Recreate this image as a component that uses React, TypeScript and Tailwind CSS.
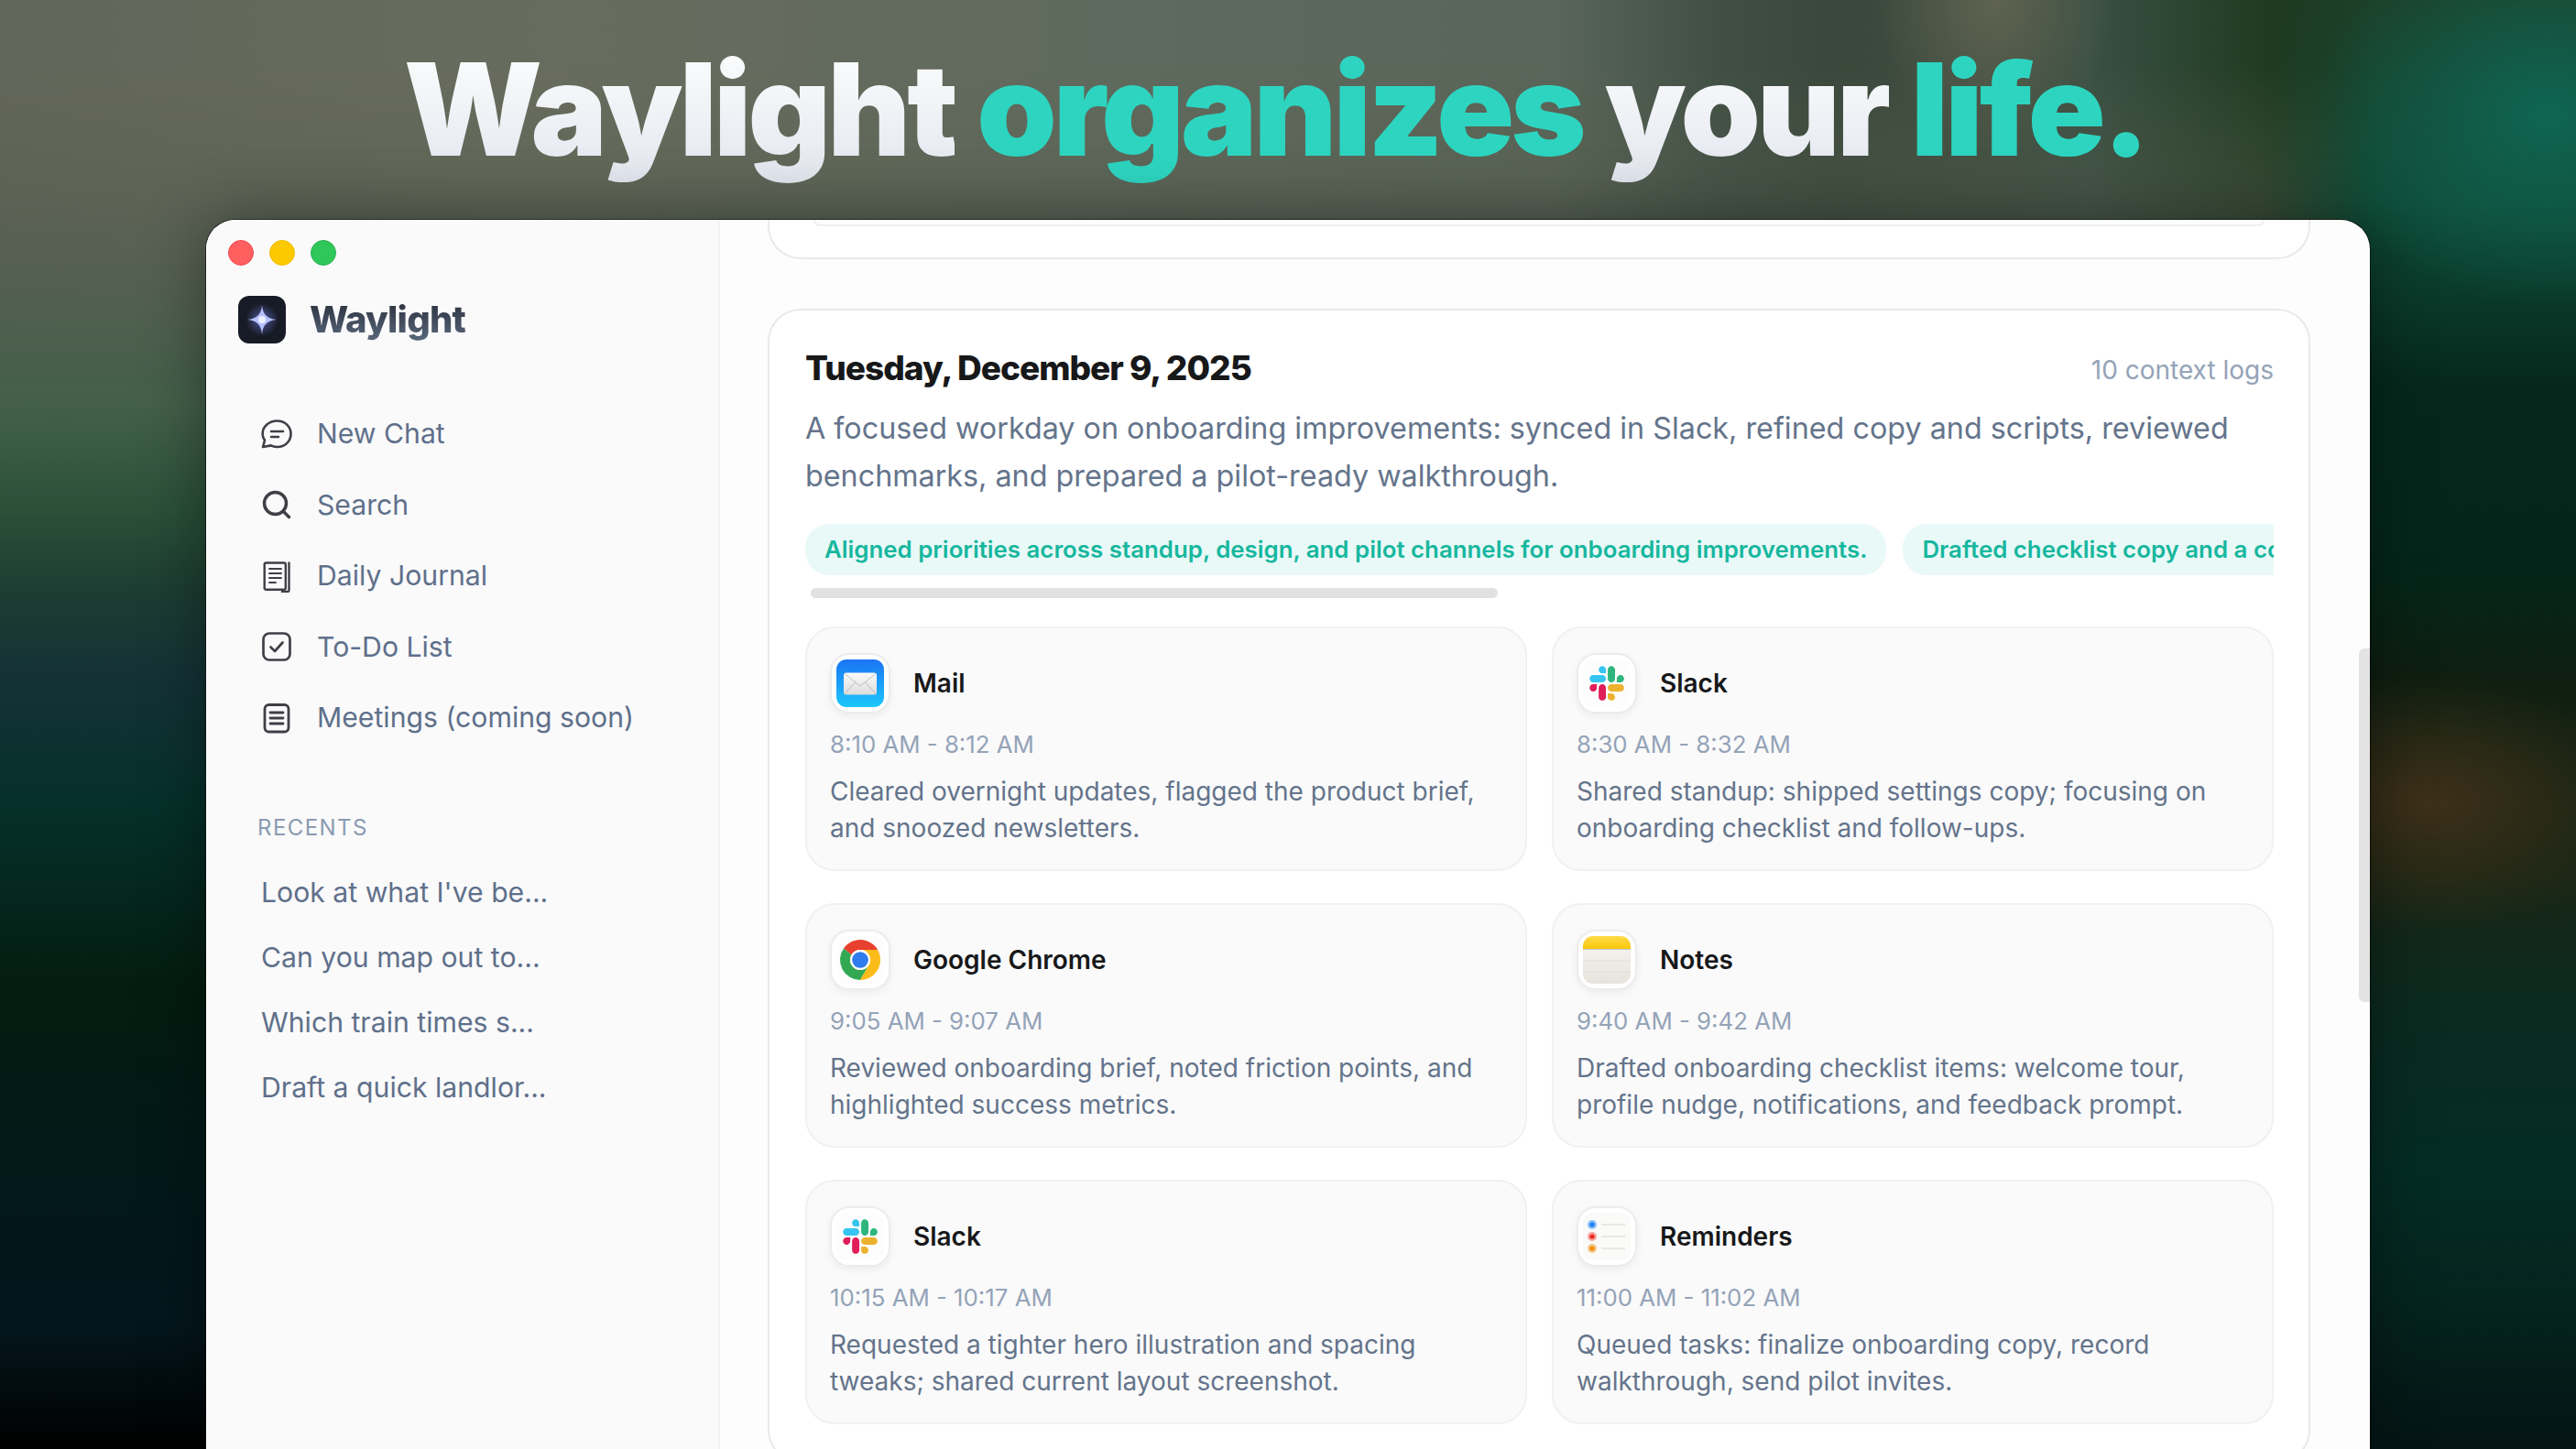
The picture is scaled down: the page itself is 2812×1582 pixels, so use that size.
import * as React from 'react';
import { Search } from 'lucide-react';

const NewChatIcon = () => (
  <svg width="36" height="36" viewBox="0 0 36 36" fill="none" stroke="#3f3f46" strokeWidth="2.6" strokeLinecap="round" strokeLinejoin="round">
    <path d="M18.5 3.5c8.600 0 15 6.200 15 14.200s-6.400 14.300-15 14.300c-2.600 0-4.800-.5-6.800-1.600L3 32l2-7.400c-1.600-2.100-2.400-4.400-2.400-6.900C2.600 9.700 9.900 3.500 18.500 3.500z" />
    <path d="M12 15h13M12 21h8" />
  </svg>
);

const JournalIcon = () => (
  <svg width="36" height="36" viewBox="0 0 36 36" fill="none" stroke="#3f3f46" strokeWidth="2.4" strokeLinecap="round" strokeLinejoin="round">
    <path d="M6.500 3.500H26a1.800 1.800 0 0 1 1.800 1.800V31a1.800 1.800 0 0 1-1.800 1.800H6.500A1.800 1.800 0 0 1 4.700 31V5.300a1.800 1.800 0 0 1 1.800-1.800z" />
    <path d="M10 10h13M10 15h13M10 20h13M10 25h7" strokeWidth="1.900" />
    <path d="M31.500 3.500v30a1.500 1.500 0 0 1-1.500 1.500h-6" />
  </svg>
);

const TodoIcon = () => (
  <svg width="36" height="36" viewBox="0 0 36 36" fill="none" stroke="#3f3f46" strokeWidth="2.700" strokeLinecap="round" strokeLinejoin="round">
    <rect x="3.500" y="3.500" width="29" height="29" rx="6.500" />
    <path d="M11.500 18.500l4.500 4.500 8.500-9.500" />
  </svg>
);

const MeetingIcon = () => (
  <svg width="36" height="36" viewBox="0 0 36 36" fill="none" stroke="#3f3f46" strokeWidth="2.8" strokeLinecap="round">
    <rect x="5" y="3.500" width="26" height="29.500" rx="4.500" />
    <path d="M11 12h14M11 18h14M11 24h14" />
  </svg>
);

const LogoIcon = () => (
  <svg width="52" height="52" viewBox="0 0 52 52">
    <defs>
      <radialGradient id="logo-glow">
        <stop offset="0" stopColor="#7f8cff" stopOpacity="0.55" />
        <stop offset="1" stopColor="#7f8cff" stopOpacity="0" />
      </radialGradient>
    </defs>
    <rect width="52" height="52" rx="12" fill="#171b26" />
    <circle cx="26" cy="26" r="18" fill="url(#logo-glow)" />
    <path d="M26 10c1 10.500 5.500 15 16 16-10.500 1-15 5.500-16 16-1-10.500-5.500-15-16-16 10.500-1 15-5.500 16-16z" fill="#b4bfff" />
    <circle cx="26" cy="26" r="4" fill="#eef0ff" />
  </svg>
);

const MailIcon = () => (
  <svg viewBox="0 0 52 52" className="h-full w-full">
    <defs>
      <linearGradient id="mail-bg" x1="0" y1="0" x2="0" y2="1">
        <stop offset="0" stopColor="#1a74f5" />
        <stop offset="1" stopColor="#1cc8fb" />
      </linearGradient>
      <linearGradient id="mail-env" x1="0" y1="0" x2="0" y2="1">
        <stop offset="0" stopColor="#fbfbfb" />
        <stop offset="1" stopColor="#dcdcdc" />
      </linearGradient>
    </defs>
    <rect width="52" height="52" rx="11" fill="url(#mail-bg)" />
    <rect x="8" y="14.500" width="36" height="24" rx="2.500" fill="url(#mail-env)" />
    <path d="M9 15.500 26 29l17-13.500M9 37.500l11.500-12.500M43 37.500 31.500 25" fill="none" stroke="#b9b9b9" strokeWidth="0.9" />
  </svg>
);

const SlackIcon = () => (
  <svg viewBox="0 0 52 52" className="h-full w-full">
    <rect width="52" height="52" rx="11" fill="#fdfdfd" />
    <g transform="translate(7 7) scale(0.3)">
      <path fill="#E01E5A" d="M27.200 80c0 7.300-5.900 13.200-13.200 13.200C6.700 93.200.8 87.300.8 80c0-7.300 5.900-13.200 13.200-13.200h13.200V80zm6.600 0c0-7.300 5.900-13.200 13.200-13.200 7.300 0 13.200 5.900 13.200 13.200v33c0 7.300-5.900 13.200-13.200 13.200-7.300 0-13.200-5.900-13.200-13.200V80z" />
      <path fill="#36C5F0" d="M47 27c-7.300 0-13.200-5.900-13.200-13.200C33.800 6.500 39.700.6 47 .6c7.300 0 13.200 5.900 13.200 13.200V27H47zm0 6.700c7.300 0 13.200 5.900 13.200 13.200 0 7.300-5.900 13.200-13.200 13.200H13.900C6.600 60.100.7 54.200.7 46.900c0-7.300 5.900-13.200 13.200-13.200H47z" />
      <path fill="#2EB67D" d="M99.900 46.900c0-7.300 5.900-13.200 13.200-13.200 7.300 0 13.200 5.900 13.200 13.200 0 7.300-5.900 13.200-13.200 13.200H99.900V46.900zm-6.600 0c0 7.300-5.900 13.200-13.200 13.200-7.300 0-13.200-5.900-13.200-13.200V13.800C66.900 6.500 72.800.6 80.100.6c7.300 0 13.200 5.900 13.200 13.200v33.100z" />
      <path fill="#ECB22E" d="M80.100 99.800c7.300 0 13.200 5.900 13.200 13.200 0 7.300-5.900 13.200-13.200 13.200-7.300 0-13.200-5.900-13.200-13.200V99.800h13.200zm0-6.600c-7.300 0-13.200-5.900-13.200-13.200 0-7.300 5.900-13.200 13.200-13.200h33.100c7.300 0 13.200 5.900 13.200 13.200 0 7.300-5.900 13.200-13.200 13.200H80.100z" />
    </g>
  </svg>
);

const ChromeIcon = () => (
  <svg viewBox="0 0 52 52" className="h-full w-full">
    <rect width="52" height="52" rx="11" fill="#fdfdfd" />
    <g transform="translate(2 2)">
      <path fill="#e8402f" d="M5.950 11.400A22 22 0 0 1 43.050 13H24a11 11 0 0 0-9.530 5.500z" />
      <path fill="#32a853" d="M5.950 11.400 14.470 18.500A11 11 0 0 0 33.530 29.500L24 46A22 22 0 0 1 5.950 11.400z" />
      <path fill="#fbbc1a" d="M43.050 13A22 22 0 0 1 24 46L33.530 29.500A11 11 0 0 0 24 13z" />
      <circle cx="24" cy="24" r="11" fill="#fff" />
      <circle cx="24" cy="24" r="8.800" fill="#2f7bf0" />
    </g>
  </svg>
);

const NotesIcon = () => (
  <svg viewBox="0 0 52 52" className="h-full w-full">
    <defs>
      <linearGradient id="notes-top" x1="0" y1="0" x2="0" y2="1">
        <stop offset="0" stopColor="#fedb4a" />
        <stop offset="1" stopColor="#fcc60b" />
      </linearGradient>
      <linearGradient id="notes-paper" x1="0" y1="0" x2="0" y2="1">
        <stop offset="0" stopColor="#f8f7f4" />
        <stop offset="1" stopColor="#e6e3dc" />
      </linearGradient>
    </defs>
    <rect width="52" height="52" rx="11" fill="url(#notes-paper)" />
    <path d="M0 14V11A11 11 0 0 1 11 0H41A11 11 0 0 1 52 11V14z" fill="url(#notes-top)" />
    <path d="M0 14.500h52" stroke="#c4c4d0" strokeWidth="1" />
    <path d="M0 27h52M0 39.500h52" stroke="#e2e0da" strokeWidth="1" />
  </svg>
);

const RemindersIcon = () => (
  <svg viewBox="0 0 52 52" className="h-full w-full">
    <rect width="52" height="52" rx="11" fill="#fafaf9" />
    <circle cx="10" cy="13" r="5" fill="#8cc0f8" />
    <circle cx="10" cy="13" r="2.600" fill="#1e80f0" />
    <circle cx="10" cy="26" r="5" fill="#f4a6a0" />
    <circle cx="10" cy="26" r="2.600" fill="#ee2a22" />
    <circle cx="10" cy="39" r="5" fill="#f5c98a" />
    <circle cx="10" cy="39" r="2.600" fill="#f28c0f" />
    <path d="M20 13h26M20 26h26M20 39h26" stroke="#d6d6d4" strokeWidth="1.200" />
  </svg>
);

const navItems = [
  { icon: <NewChatIcon />, label: 'New Chat' },
  { icon: <Search size={36} strokeWidth={2.3} color="#3f3f46" />, label: 'Search' },
  { icon: <JournalIcon />, label: 'Daily Journal' },
  { icon: <TodoIcon />, label: 'To-Do List' },
  { icon: <MeetingIcon />, label: 'Meetings (coming soon)' },
];

const recents = ["Look at what I've be...", 'Can you map out to...', 'Which train times s...', 'Draft a quick landlor...'];

const logs = [
  { icon: <MailIcon />, name: 'Mail', time: '8:10 AM - 8:12 AM', desc: 'Cleared overnight updates, flagged the product brief, and snoozed newsletters.' },
  { icon: <SlackIcon />, name: 'Slack', time: '8:30 AM - 8:32 AM', desc: 'Shared standup: shipped settings copy; focusing on onboarding checklist and follow-ups.' },
  { icon: <ChromeIcon />, name: 'Google Chrome', time: '9:05 AM - 9:07 AM', desc: 'Reviewed onboarding brief, noted friction points, and highlighted success metrics.' },
  { icon: <NotesIcon />, name: 'Notes', time: '9:40 AM - 9:42 AM', desc: 'Drafted onboarding checklist items: welcome tour, profile nudge, notifications, and feedback prompt.' },
  { icon: <SlackIcon />, name: 'Slack', time: '10:15 AM - 10:17 AM', desc: 'Requested a tighter hero illustration and spacing tweaks; shared current layout screenshot.' },
  { icon: <RemindersIcon />, name: 'Reminders', time: '11:00 AM - 11:02 AM', desc: 'Queued tasks: finalize onboarding copy, record walkthrough, send pilot invites.' },
];

const App: React.FC = () => {
  return (
    <div className="relative h-[1582px] w-[2812px] overflow-hidden bg-[linear-gradient(180deg,#686b58_0px,#5c604d_130px,#505c4e_260px,#44604a_440px,#2a5038_560px,#1c3c32_650px,#143236_740px,#05302a_880px,#041c10_1080px,#03181a_1300px,#04161c_1450px,#000_1582px)] font-['Inter',sans-serif]">
      {/* Blurred backdrop */}
      <div className="absolute inset-x-0 top-0 h-[600px] bg-[radial-gradient(ellipse_130px_170px_at_2177px_0px,#5f6350_0%,transparent_100%),linear-gradient(90deg,#62665a_0px,#686c5e_600px,#5f6a5e_1200px,#596559_1700px,#3f4f44_1880px,#3a483c_2000px,#3e4d40_2170px,#3a5044_2280px,#1f3a20_2480px,#1f3a20_2600px)] [mask-image:linear-gradient(to_bottom,black_70px,transparent_420px)]" />
      <div className="absolute inset-y-0 right-0 w-[340px] bg-[radial-gradient(ellipse_260px_210px_at_310px_125px,#0f6553_0%,transparent_100%),radial-gradient(ellipse_250px_140px_at_178px_875px,#3e3019_0%,transparent_100%),linear-gradient(180deg,#1d3f28_0px,#0f4a36_220px,#0a3a2a_320px,#05281c_420px,#04261a_620px,#0e1e10_740px,#182615_960px,#0b2a20_1100px,#032c24_1280px,#05241e_1420px,#041414_1582px)] [mask-image:linear-gradient(to_right,transparent,black_115px)]" />

      <h1 className="relative h-[240px] pt-[34px] pr-[28px] text-center text-[140px] leading-[170px] font-black tracking-[-0.028em] whitespace-nowrap">
        <span className="bg-gradient-to-b from-white to-[#e2e6ee] bg-clip-text text-transparent">Waylight</span>{' '}
        <span className="text-[#2dd5c0]">organizes</span>{' '}
        <span className="bg-gradient-to-b from-white to-[#e2e6ee] bg-clip-text text-transparent">your</span>{' '}
        <span className="text-[#2dd5c0]">life.</span>
      </h1>

      <div className="relative ml-[225px] flex h-[1342px] w-[2362px] overflow-hidden rounded-t-[32px] bg-[#fdfdfd] shadow-[0_0_0_1px_rgba(0,0,0,0.55),0_0_70px_rgba(0,0,0,0.4)]">
        {/* Sidebar */}
        <aside className="w-[561px] shrink-0 border-r-2 border-[#f3f3f4] bg-[#fafafb] pt-[22px]">
          <div className="flex gap-[17px] pl-[24px]">
            <span className="size-[28px] rounded-full border border-[#ee4a4f] bg-[#ff5f5f]" />
            <span className="size-[28px] rounded-full border border-[#f0bd00] bg-[#fcc800]" />
            <span className="size-[28px] rounded-full border border-[#27b24b] bg-[#30c75a]" />
          </div>
          <div className="mt-[33px] flex items-center gap-[26px] pl-[35px]">
            <LogoIcon />
            <span className="bg-gradient-to-b from-[#262c38] to-[#5d6b80] bg-clip-text text-[40px] leading-[52px] font-extrabold tracking-[-0.02em] text-transparent">Waylight</span>
          </div>
          <nav className="mt-[60px] pl-[58px]">
            {navItems.map((item) => (
              <div key={item.label} className="flex h-[77.5px] items-center gap-[25px]">
                <span className="flex w-[38px] items-center justify-center">{item.icon}</span>
                <span className="text-[30.2px] text-[#5f708a]">{item.label}</span>
              </div>
            ))}
          </nav>
          <p className="mt-[66px] pl-[56px] text-[24px] leading-[30px] tracking-[0.06em] text-[#8a9ab0]">RECENTS</p>
          <div className="mt-[20px] pl-[60px]">
            {recents.map((r) => (
              <p key={r} className="h-[71px] text-[30.2px] leading-[71px] text-[#5f708a]">{r}</p>
            ))}
          </div>
        </aside>

        {/* Main content */}
        <main className="relative min-w-0 flex-1 pr-[65px] pl-[52px]">
          <div className="h-[43px] rounded-b-[36px] border-x-2 border-b-2 border-[#e9e9ea] bg-white px-[48px]">
            <div className="h-[7px] rounded-b-[16px] border-x-2 border-b-2 border-[#f0f0f0]" />
          </div>

          <section className="mt-[54px] rounded-[36px] border-2 border-[#e9e9ea] bg-white pt-[41px] pr-[38px] pl-[39px]">
            <div className="flex h-[44px] items-center justify-between">
              <h2 className="text-[37px] leading-[44px] font-extrabold tracking-[-0.027em] text-[#17181a]">Tuesday, December 9, 2025</h2>
              <span className="mt-[4px] text-[28px] text-[#94a3b8]">10 context logs</span>
            </div>
            <p className="mt-[18px] text-[32.3px] leading-[52px] text-[#64748b]">
              A focused workday on onboarding improvements: synced in Slack, refined copy and scripts, reviewed benchmarks, and prepared a pilot-ready walkthrough.
            </p>
            <div className="mt-[26px] flex gap-[18px] overflow-hidden">
              <span className="shrink-0 rounded-[26px] bg-[#e9f9f8] px-[21px] text-[25.85px] leading-[56px] font-semibold whitespace-nowrap text-[#17b79e]">
                Aligned priorities across standup, design, and pilot channels for onboarding improvements.
              </span>
              <span className="shrink-0 rounded-[26px] bg-[#e9f9f8] px-[21px] text-[25.85px] leading-[56px] font-semibold whitespace-nowrap text-[#17b79e]">
                Drafted checklist copy and a concise welcome tour script.
              </span>
            </div>
            <div className="mt-[14px] ml-[6px] h-[11px] w-[750px] rounded-full bg-[#e1e1e1]" />
            <div className="mt-[31px] grid grid-cols-2 gap-x-[27px] gap-y-[35px] pb-[40px]">
              {logs.map((log, i) => (
                <div key={i} className="rounded-[32px] border-2 border-[#f1f1f2] bg-[#fafafa] px-[25px] pt-[27px] pb-[25px]">
                  <div className="flex items-center gap-[25px]">
                    <span className="flex size-[66px] items-center justify-center rounded-[21px] border-2 border-[#ececec] bg-white p-[5px] shadow-[0_3px_8px_rgba(0,0,0,0.06)]">{log.icon}</span>
                    <span className="text-[28px] font-semibold text-[#17181a]">{log.name}</span>
                  </div>
                  <p className="mt-[16px] text-[25.8px] leading-[36px] text-[#94a3b8]">{log.time}</p>
                  <p className="mt-[14px] text-[28px] leading-[39.5px] text-[#64748b]">{log.desc}</p>
                </div>
              ))}
            </div>
          </section>

          {/* Scrollbar */}
          <div className="absolute top-[468px] right-0 h-[386px] w-[12px] rounded-l-[6px] bg-[#e3e3e3]" />
        </main>
      </div>
    </div>
  );
};

export default App;
